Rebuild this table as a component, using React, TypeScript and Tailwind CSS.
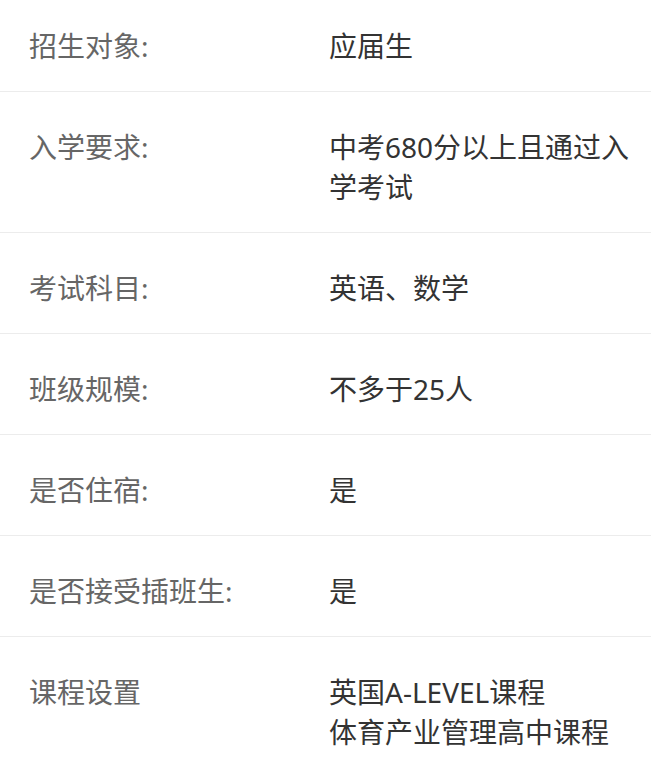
import React from 'react';

const rows = [
  { label: '招生对象:', value: ['应届生'] },
  { label: '入学要求:', value: ['中考680分以上且通过入学考试'] },
  { label: '考试科目:', value: ['英语、数学'] },
  { label: '班级规模:', value: ['不多于25人'] },
  { label: '是否住宿:', value: ['是'] },
  { label: '是否接受插班生:', value: ['是'] },
  { label: '课程设置', value: ['英国A-LEVEL课程', '体育产业管理高中课程'] },
];

export default function App() {
  return (
    <div
      className="w-[651px] h-[757px] overflow-hidden bg-white text-[28px] leading-[40px]"
      style={{ fontFamily: '"Noto Sans", "Noto Sans CJK SC", sans-serif' }}
    >
      {rows.map((row, i) => (
        <div
          key={row.label}
          className={`flex border-b border-[#ececec] pb-[25px] ${i === 0 ? 'pt-[26px]' : 'pt-[35px]'}`}
        >
          <div className="w-[329px] shrink-0 pl-[29px] text-[#666666]">{row.label}</div>
          <div className="flex-1 pr-[12px] text-[#333333]">
            {row.value.map((line) => (
              <div key={line}>{line}</div>
            ))}
          </div>
        </div>
      ))}
    </div>
  );
}
